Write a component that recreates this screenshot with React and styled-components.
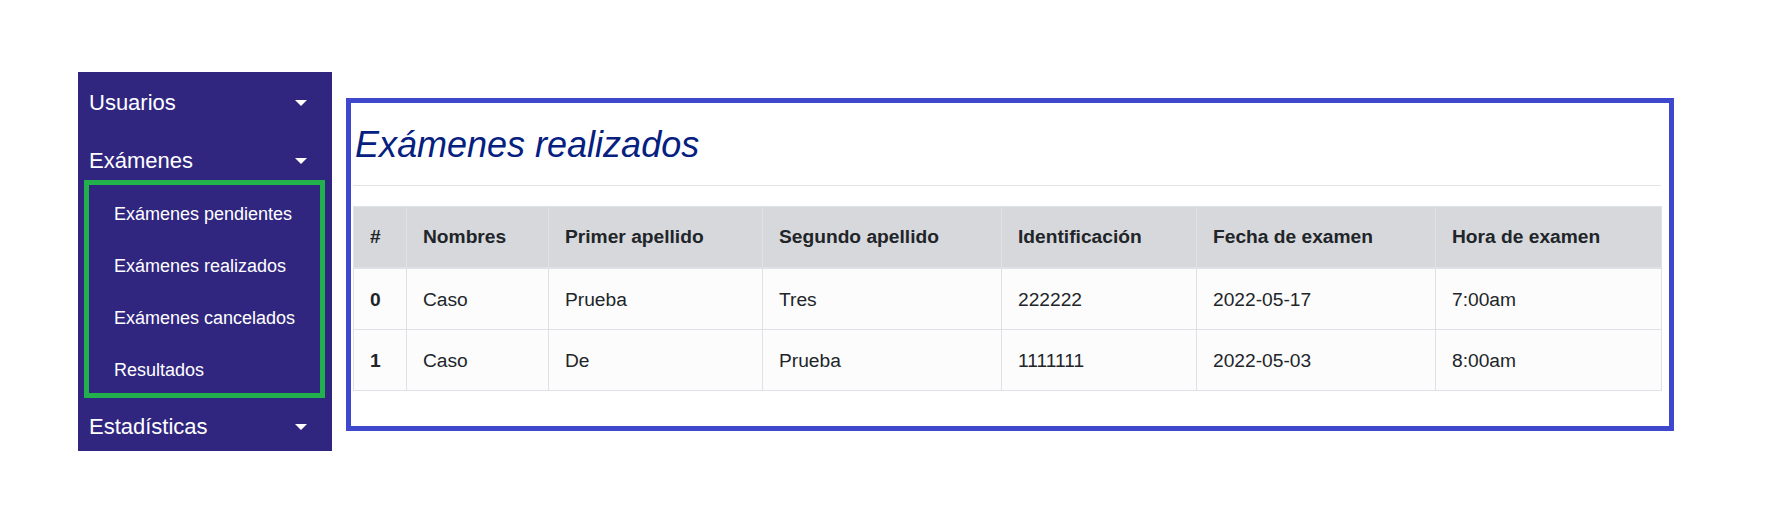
import React from "react";
import styled, { createGlobalStyle } from "styled-components";

const GlobalStyle = createGlobalStyle`
  body {
    margin: 0;
    background: #ffffff;
    font-family: "Liberation Sans", Arial, sans-serif;
  }
`;

const menu = [
  { titulo: "Usuarios", espacio: 0 },
  {
    titulo: "Exámenes",
    espacio: 32,
    items: [
      "Exámenes pendientes",
      "Exámenes realizados",
      "Exámenes cancelados",
      "Resultados",
    ],
  },
  { titulo: "Estadísticas", espacio: 16 },
];

const columnas = [
  { nombre: "#", ancho: 53 },
  { nombre: "Nombres", ancho: 142 },
  { nombre: "Primer apellido", ancho: 214 },
  { nombre: "Segundo apellido", ancho: 239 },
  { nombre: "Identificación", ancho: 195 },
  { nombre: "Fecha de examen", ancho: 239 },
  { nombre: "Hora de examen", ancho: 226 },
];

const examenes = [
  ["Caso", "Prueba", "Tres", "222222", "2022-05-17", "7:00am"],
  ["Caso", "De", "Prueba", "1111111", "2022-05-03", "8:00am"],
];

const App = () => {
  return (
    <Page>
      <GlobalStyle />
      <Sidebar>
        {menu.map((m, i) => (
          <MenuGroup key={`menu${i}`} $espacio={m.espacio}>
            <MenuHeader>
              <span>{m.titulo}</span>
              <Caret />
            </MenuHeader>
            {m.items && (
              <Submenu>
                {m.items.map((item, j) => (
                  <SubItem key={`sub${j}`}>{item}</SubItem>
                ))}
              </Submenu>
            )}
          </MenuGroup>
        ))}
      </Sidebar>

      <Panel>
        <Title>Exámenes realizados</Title>
        <Divider />
        <Table>
          <colgroup>
            {columnas.map((c, i) => (
              <col key={`col${i}`} width={c.ancho} />
            ))}
          </colgroup>
          <thead>
            <tr>
              {columnas.map((c, i) => (
                <Th key={`th${i}`}>{c.nombre}</Th>
              ))}
            </tr>
          </thead>
          <tbody>
            {examenes.map((fila, i) => (
              <tr key={`fila${i}`}>
                <Td $bold>{i}</Td>
                {fila.map((valor, j) => (
                  <Td key={`td${j}`}>{valor}</Td>
                ))}
              </tr>
            ))}
          </tbody>
        </Table>
      </Panel>
    </Page>
  );
};

export default App;

const Page = styled.div`
  display: flex;
  align-items: flex-start;
  padding: 72px 0 0 78px;
`;

const Sidebar = styled.nav`
  width: 254px;
  box-sizing: border-box;
  padding: 18px 0 11px;
  background: #30267f;
  color: #ffffff;
`;

const MenuGroup = styled.div`
  margin-top: ${(p) => p.$espacio}px;
`;

const MenuHeader = styled.div`
  display: flex;
  align-items: center;
  justify-content: space-between;
  height: 26px;
  padding: 0 25px 0 11px;
  font-size: 22px;
  line-height: 26px;
`;

const Caret = styled.span`
  width: 0;
  height: 0;
  border-left: 6px solid transparent;
  border-right: 6px solid transparent;
  border-top: 6px solid #ffffff;
`;

const Submenu = styled.ul`
  list-style: none;
  margin: 6px 7px 0 6px;
  padding: 0;
  border: 5px solid #22b14c;
`;

const SubItem = styled.li`
  box-sizing: border-box;
  height: 52px;
  padding: 6px 0 0 25px;
  font-size: 18px;
  line-height: 46px;
`;

const Panel = styled.section`
  width: 1328px;
  box-sizing: border-box;
  margin: 26px 0 0 14px;
  padding: 20px 8px 35px 2px;
  border: 5px solid #3f48cc;
`;

const Title = styled.h1`
  margin: 0;
  padding-left: 2px;
  font-size: 36px;
  font-weight: normal;
  font-style: italic;
  line-height: 43px;
  color: #06207f;
`;

const Divider = styled.hr`
  margin: 19px 0 20px;
  border: 0;
  border-top: 1px solid #e3e4e6;
`;

const Table = styled.table`
  width: 1308px;
  table-layout: fixed;
  border-collapse: collapse;
  color: #212529;
  font-size: 19.2px;
  line-height: 28px;
`;

const Th = styled.th`
  padding: 16px 16px;
  text-align: left;
  font-weight: bold;
  background: #d6d8db;
  border: 1px solid #dee2e6;
  border-bottom: 2px solid #dee2e6;
  white-space: nowrap;
`;

const Td = styled.td`
  padding: 17px 16px 15px;
  font-weight: ${(p) => (p.$bold ? "bold" : "normal")};
  background: #fcfcfc;
  border: 1px solid #dee2e6;
  white-space: nowrap;
`;
